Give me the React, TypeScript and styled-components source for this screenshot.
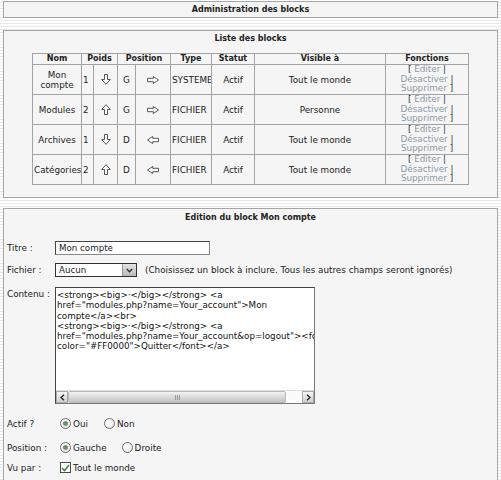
import React from "react";
import styled, { createGlobalStyle } from "styled-components";

const GlobalStyle = createGlobalStyle`
  body {
    margin: 0;
    background: repeating-linear-gradient(
      to bottom,
      #ffffff 0px,
      #ffffff 2px,
      #e8e8e8 2px,
      #e8e8e8 3px
    );
    font-family: "DejaVu Sans", Verdana, sans-serif;
    font-size: 8.8px;
    color: #222;
  }
`;

const Page = styled.div`
  display: flex;
  flex-direction: column;
  padding: 1px 3px 0 3px;
`;

const Panel = styled.div<{ $gap?: number }>`
  border: 1px solid #a6a6a6;
  background: #f5f5f5;
  margin-bottom: ${(p) => p.$gap ?? 0}px;
`;

const PanelTitle = styled.div<{ $pad: number; $after: number }>`
  font-weight: bold;
  font-size: 8px;
  text-align: center;
  line-height: 10px;
  padding-top: ${(p) => p.$pad}px;
  margin-bottom: ${(p) => p.$after}px;
`;

const TopTitle = styled.div`
  height: 15px;
  line-height: 15px;
  font-size: 8px;
  font-weight: bold;
  text-align: center;
`;

const ListBody = styled.div`
  padding: 0 0 12px 0;
`;

const Grid = styled.table`
  width: 436px;
  margin: 0 auto;
  border-collapse: collapse;
  table-layout: fixed;
`;

const Col = styled.col<{ $w: number }>`
  width: ${(p) => p.$w}px;
`;

const Th = styled.th`
  border: 1px solid #a3a3a3;
  height: 10px;
  padding: 0;
  font-size: 8px;
  line-height: 10px;
  font-weight: bold;
  text-align: center;
`;

const Tr = styled.tr`
  height: 30px;
`;

const Td = styled.td<{ $align?: string }>`
  border: 1px solid #a3a3a3;
  padding: 0 1px;
  line-height: 10px;
  text-align: ${(p) => p.$align ?? "center"};
  vertical-align: middle;
  white-space: nowrap;
  overflow: hidden;
`;

const NameCell = styled(Td)`
  white-space: normal;
`;

const FnCell = styled(Td)`
  line-height: 9.5px;
  color: #333;
`;

const FnLink = styled.a`
  color: #8a9aa9;
  text-decoration: none;
`;

const ArrowBox = styled.svg`
  display: block;
  margin: 0 auto;
`;

type Dir = "up" | "down" | "left" | "right";

function Arrow({ dir }: { dir: Dir }) {
  if (dir === "up" || dir === "down") {
    return (
      <ArrowBox width="10" height="11" viewBox="0 0 10 11">
        <polygon
          points="3.5,0.5 6.5,0.5 6.5,5.5 9.3,5.5 5,10.3 0.7,5.5 3.5,5.5"
          fill="#fff"
          stroke="#444"
          strokeWidth="0.9"
          transform={dir === "up" ? "rotate(180 5 5.5)" : undefined}
        />
      </ArrowBox>
    );
  }
  return (
    <ArrowBox width="12" height="8" viewBox="0 0 12 8">
      <polygon
        points="0.5,2.3 6.3,2.3 6.3,0.5 11.5,4 6.3,7.5 6.3,5.7 0.5,5.7"
        fill="#fff"
        stroke="#444"
        strokeWidth="0.9"
        transform={dir === "left" ? "rotate(180 6 4)" : undefined}
      />
    </ArrowBox>
  );
}

const EditBody = styled.div`
  padding: 0 0 0 3px;
  display: flex;
  flex-direction: column;
`;

const FormRow = styled.div<{ $top: number; $start?: boolean }>`
  display: flex;
  align-items: ${(p) => (p.$start ? "flex-start" : "center")};
  margin-top: ${(p) => p.$top}px;
`;

const Label = styled.div<{ $shift?: number }>`
  width: 48px;
  flex: none;
  line-height: 10px;
  padding-top: ${(p) => p.$shift ?? 0}px;
`;

const TextInput = styled.div`
  width: 150px;
  height: 12px;
  border: 1px solid #444;
  border-right-color: #888;
  border-bottom-color: #888;
  background: #fff;
  font-size: 8.7px;
  line-height: 12px;
  padding-left: 3px;
`;

const SelectBox = styled.div`
  width: 80px;
  height: 12px;
  border: 1px solid #333;
  background: #fff;
  display: flex;
  align-items: stretch;
  font-size: 8.7px;
`;

const SelectText = styled.div`
  flex: 1;
  line-height: 12px;
  padding-left: 3px;
`;

const SelectBtn = styled.div`
  width: 13px;
  background: linear-gradient(#e4e4e4, #b9b9b9);
  border-left: 1px solid #999;
  display: flex;
  align-items: center;
  justify-content: center;
`;

const Hint = styled.div`
  margin-left: 8px;
  line-height: 10px;
  white-space: nowrap;
`;

const Editor = styled.div`
  width: 258px;
  height: 115px;
  border: 1px solid #444;
  border-right-color: #777;
  border-bottom-color: #777;
  background: #fff;
  display: flex;
  flex-direction: column;
`;

const EditorText = styled.div`
  flex: 1;
  overflow: hidden;
  white-space: pre;
  font-size: 8.75px;
  line-height: 10.3px;
  padding: 2px 0 0 1px;
  color: #111;
`;

const HScroll = styled.div`
  height: 12px;
  display: flex;
  border-top: 1px solid #ddd;
`;

const ScrollBtn = styled.div`
  width: 12px;
  background: linear-gradient(#f4f4f4, #cfcfcf);
  border: 1px solid #aaa;
  box-sizing: border-box;
  display: flex;
  align-items: center;
  justify-content: center;
`;

const Thumb = styled.div`
  width: 218px;
  background: linear-gradient(#f2f2f2, #c4c4c8);
  border: 1px solid #b8b8b8;
  border-radius: 2px;
  box-sizing: border-box;
  display: flex;
  align-items: center;
  justify-content: center;
`;

const Grip = styled.div`
  width: 5px;
  height: 5px;
  background: repeating-linear-gradient(
    to right,
    #999 0px,
    #999 1px,
    transparent 1px,
    transparent 2px
  );
`;

const Track = styled.div`
  flex: 1;
  background: #fbfbfb;
`;

const Options = styled.div`
  display: flex;
  align-items: center;
  padding-left: 5px;
`;

const Option = styled.label<{ $gap: number }>`
  display: flex;
  align-items: center;
  gap: 2px;
  margin-right: ${(p) => p.$gap}px;
  line-height: 10px;
`;

const Radio = styled.span<{ $on?: boolean }>`
  width: 11px;
  height: 11px;
  box-sizing: border-box;
  border-radius: 50%;
  border: 1px solid #6f6f6f;
  background: radial-gradient(circle at 40% 35%, #ffffff, #e2e2e2);
  display: flex;
  align-items: center;
  justify-content: center;
  &::after {
    content: "";
    width: 5px;
    height: 5px;
    border-radius: 50%;
    background: ${(p) => (p.$on ? "#6f8f6f" : "transparent")};
  }
`;

const CheckBox = styled.span`
  width: 11px;
  height: 11px;
  box-sizing: border-box;
  border: 1px solid #4a4a4a;
  background: #fff;
  display: flex;
  align-items: center;
  justify-content: center;
`;

const lines = [
  "<strong><big>·</big></strong> <a",
  'href="modules.php?name=Your_account">Mon',
  "compte</a><br>",
  "<strong><big>·</big></strong> <a",
  'href="modules.php?name=Your_account&op=logout"><font',
  'color="#FF0000">Quitter</font></a>',
].join("\n");

const blocks = [
  { name: "Mon compte", w: "1", wd: "down", p: "G", pd: "right", type: "SYSTEME", who: "Tout le monde" },
  { name: "Modules", w: "2", wd: "up", p: "G", pd: "right", type: "FICHIER", who: "Personne" },
  { name: "Archives", w: "1", wd: "down", p: "D", pd: "left", type: "FICHIER", who: "Tout le monde" },
  { name: "Catégories", w: "2", wd: "up", p: "D", pd: "left", type: "FICHIER", who: "Tout le monde" },
] as const;

export default function App() {
  return (
    <>
      <GlobalStyle />
      <Page>
        <Panel $gap={12}>
          <TopTitle>Administration des blocks</TopTitle>
        </Panel>

        <Panel $gap={10}>
          <PanelTitle $pad={3} $after={9}>
            Liste des blocks
          </PanelTitle>
          <ListBody>
            <Grid>
              <colgroup>
                <Col $w={49} />
                <Col $w={12} />
                <Col $w={24} />
                <Col $w={18} />
                <Col $w={35} />
                <Col $w={41} />
                <Col $w={43} />
                <Col $w={131} />
                <Col $w={83} />
              </colgroup>
              <thead>
                <tr>
                  <Th>Nom</Th>
                  <Th colSpan={2}>Poids</Th>
                  <Th colSpan={2}>Position</Th>
                  <Th>Type</Th>
                  <Th>Statut</Th>
                  <Th>Visible à</Th>
                  <Th>Fonctions</Th>
                </tr>
              </thead>
              <tbody>
                {blocks.map((b) => (
                  <Tr key={b.name}>
                    <NameCell>{b.name}</NameCell>
                    <Td $align="left">{b.w}</Td>
                    <Td>
                      <Arrow dir={b.wd} />
                    </Td>
                    <Td>{b.p}</Td>
                    <Td>
                      <Arrow dir={b.pd} />
                    </Td>
                    <Td $align="left">{b.type}</Td>
                    <Td>Actif</Td>
                    <Td>{b.who}</Td>
                    <FnCell>
                      [ <FnLink href="#">Editer</FnLink> |
                      <br />
                      <FnLink href="#">Désactiver</FnLink> |
                      <br />
                      <FnLink href="#">Supprimer</FnLink> ]
                    </FnCell>
                  </Tr>
                ))}
              </tbody>
            </Grid>
          </ListBody>
        </Panel>

        <Panel>
          <PanelTitle $pad={4} $after={0}>
            Edition du block Mon compte
          </PanelTitle>
          <EditBody>
            <FormRow $top={18}>
              <Label>Titre :</Label>
              <TextInput>Mon compte</TextInput>
            </FormRow>
            <FormRow $top={8}>
              <Label>Fichier :</Label>
              <SelectBox>
                <SelectText>Aucun</SelectText>
                <SelectBtn>
                  <svg width="7" height="5" viewBox="0 0 7 5">
                    <polyline points="0.8,1 3.5,3.8 6.2,1" fill="none" stroke="#333" strokeWidth="1.4" />
                  </svg>
                </SelectBtn>
              </SelectBox>
              <Hint>(Choisissez un block à inclure. Tous les autres champs seront ignorés)</Hint>
            </FormRow>
            <FormRow $top={10} $start>
              <Label $shift={2}>Contenu :</Label>
              <Editor>
                <EditorText>{lines}</EditorText>
                <HScroll>
                  <ScrollBtn>
                    <svg width="5" height="7" viewBox="0 0 5 7">
                      <polyline points="4,0.8 1,3.5 4,6.2" fill="none" stroke="#222" strokeWidth="1.3" />
                    </svg>
                  </ScrollBtn>
                  <Thumb>
                    <Grip />
                  </Thumb>
                  <Track />
                  <ScrollBtn>
                    <svg width="5" height="7" viewBox="0 0 5 7">
                      <polyline points="1,0.8 4,3.5 1,6.2" fill="none" stroke="#222" strokeWidth="1.3" />
                    </svg>
                  </ScrollBtn>
                </HScroll>
              </Editor>
            </FormRow>
            <FormRow $top={14}>
              <Label>Actif ?</Label>
              <Options>
                <Option $gap={16}>
                  <Radio $on />
                  Oui
                </Option>
                <Option $gap={0}>
                  <Radio />
                  Non
                </Option>
              </Options>
            </FormRow>
            <FormRow $top={13}>
              <Label>Position :</Label>
              <Options>
                <Option $gap={15}>
                  <Radio $on />
                  Gauche
                </Option>
                <Option $gap={0}>
                  <Radio />
                  Droite
                </Option>
              </Options>
            </FormRow>
            <FormRow $top={9}>
              <Label>Vu par :</Label>
              <Options>
                <Option $gap={0}>
                  <CheckBox>
                    <svg width="9" height="8" viewBox="0 0 9 8">
                      <polyline points="1,4 3.5,6.5 8,1" fill="none" stroke="#3d8a3d" strokeWidth="1.6" />
                    </svg>
                  </CheckBox>
                  Tout le monde
                </Option>
              </Options>
            </FormRow>
            <FormRow $top={20} />
          </EditBody>
        </Panel>
      </Page>
    </>
  );
}
